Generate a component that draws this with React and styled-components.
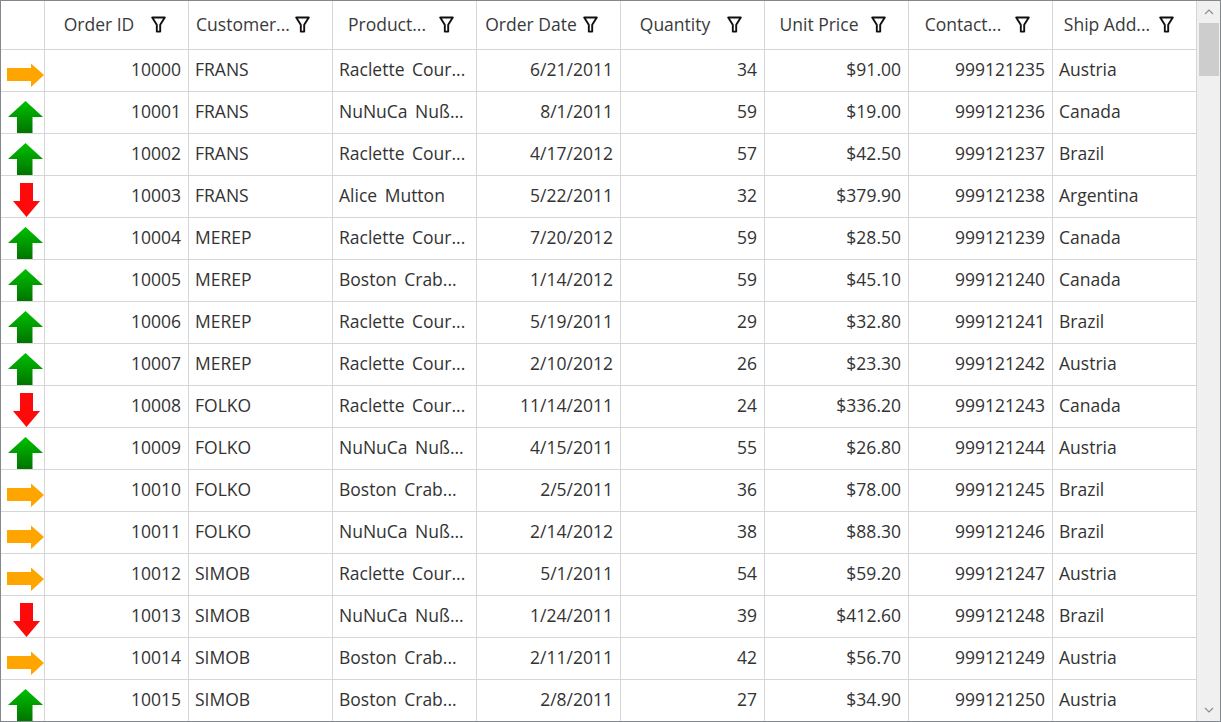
import React from 'react'
import styled, { createGlobalStyle } from 'styled-components'

const GlobalStyle = createGlobalStyle`
  html, body {
    margin: 0;
    padding: 0;
    background: #ffffff;
  }
  * {
    box-sizing: border-box;
  }
`

const Frame = styled.div`
  width: 1221px;
  height: 722px;
  border: 1px solid #828790;
  display: flex;
  overflow: hidden;
  background: #ffffff;
  font-family: "Open Sans", "Noto Sans", sans-serif;
  font-size: 17.5px;
  color: #333333;
`

const Grid = styled.div`
  flex: 1;
  display: grid;
  grid-template-columns: 44px repeat(8, 144px);
  grid-auto-rows: 42px;
  grid-template-rows: 49px;
  align-content: start;
  overflow: hidden;
`

const Corner = styled.div`
  border-right: 1px solid #d6d6d6;
  border-bottom: 1px solid #d6d6d6;
`

const HeaderCell = styled.div`
  display: flex;
  align-items: center;
  padding: 0 22px 2px 6px;
  border-right: 1px solid #d6d6d6;
  border-bottom: 1px solid #d6d6d6;
  color: #3a3a3a;
`

const HeaderLabel = styled.span`
  flex: 1;
  text-align: center;
  white-space: nowrap;
  overflow: hidden;
  padding-right: 4px;
`

const Indicator = styled.div`
  border-right: 1px solid #d6d6d6;
  border-bottom: 1px solid #d6d6d6;
  svg {
    display: block;
  }
`

const Cell = styled.div`
  display: flex;
  align-items: center;
  justify-content: ${p => (p.$right ? 'flex-end' : 'flex-start')};
  padding: 0 7px 3px 6px;
  border-right: 1px solid #d6d6d6;
  border-bottom: 1px solid #d6d6d6;
  white-space: nowrap;
  overflow: hidden;
  word-spacing: ${p => (p.$wide ? '3px' : 'normal')};
`

const ScrollBar = styled.div`
  width: 23px;
  background: #f0f0f0;
  display: flex;
  flex-direction: column;
  align-items: center;
`

const ScrollButton = styled.div`
  height: 22px;
  width: 100%;
  display: flex;
  align-items: center;
  justify-content: center;
`

const Track = styled.div`
  flex: 1;
  width: 100%;
  padding: 0 1px 0 2px;
`

const Thumb = styled.div`
  height: 53px;
  background: #cdcdcd;
`

const FilterIcon = () => (
  <svg width="15" height="17" viewBox="0 0 15 17">
    <path
      d="M1.2 1.5 H13.8 L9.2 8.8 V15.6 H5.8 V8.8 Z"
      fill="none"
      stroke="#111"
      strokeWidth="1.9"
      strokeLinejoin="round"
    />
  </svg>
)

const TrendIcon = ({ trend }) => {
  if (trend === 'up') {
    return (
      <svg width="43" height="41" viewBox="0 0 43 41">
        <defs>
          <linearGradient id="greenUp" x1="0" y1="0" x2="0" y2="1">
            <stop offset="0" stopColor="#00c000" />
            <stop offset="1" stopColor="#007400" />
          </linearGradient>
        </defs>
        <path d="M24.5 9 L42 25 H31.5 V41 H16 V25 H7 Z" fill="url(#greenUp)" />
      </svg>
    )
  }
  if (trend === 'down') {
    return (
      <svg width="43" height="41" viewBox="0 0 43 41">
        <path d="M19 7 H32 V25 H39 L25.5 41 L12 25 H19 Z" fill="#ff0a0a" />
      </svg>
    )
  }
  return (
    <svg width="43" height="41" viewBox="0 0 43 41">
      <path d="M6 18 H30 V13.5 L43 25 L30 37 V31 H6 Z" fill="#ffa500" />
    </svg>
  )
}

const Chevron = ({ up }) => (
  <svg width="10" height="6" viewBox="0 0 10 6">
    <path
      d={up ? 'M1 5 L5 1 L9 5' : 'M1 1 L5 5 L9 1'}
      fill="none"
      stroke="#8a8a8a"
      strokeWidth="1.1"
    />
  </svg>
)

const columns = [
  { label: 'Order ID', key: 'id', right: true },
  { label: 'Customer...', key: 'customer' },
  { label: 'Product...', key: 'product', wide: true },
  { label: 'Order Date', key: 'date', right: true },
  { label: 'Quantity', key: 'qty', right: true },
  { label: 'Unit Price', key: 'price', right: true },
  { label: 'Contact...', key: 'contact', right: true },
  { label: 'Ship Add...', key: 'country' },
]

const RAC = 'Raclette Cour...'
const NUN = 'NuNuCa Nuß...'
const BOS = 'Boston Crab...'

const orders = [
  ['flat', 'FRANS', RAC, '6/21/2011', 34, '$91.00', 'Austria'],
  ['up', 'FRANS', NUN, '8/1/2011', 59, '$19.00', 'Canada'],
  ['up', 'FRANS', RAC, '4/17/2012', 57, '$42.50', 'Brazil'],
  ['down', 'FRANS', 'Alice Mutton', '5/22/2011', 32, '$379.90', 'Argentina'],
  ['up', 'MEREP', RAC, '7/20/2012', 59, '$28.50', 'Canada'],
  ['up', 'MEREP', BOS, '1/14/2012', 59, '$45.10', 'Canada'],
  ['up', 'MEREP', RAC, '5/19/2011', 29, '$32.80', 'Brazil'],
  ['up', 'MEREP', RAC, '2/10/2012', 26, '$23.30', 'Austria'],
  ['down', 'FOLKO', RAC, '11/14/2011', 24, '$336.20', 'Canada'],
  ['up', 'FOLKO', NUN, '4/15/2011', 55, '$26.80', 'Austria'],
  ['flat', 'FOLKO', BOS, '2/5/2011', 36, '$78.00', 'Brazil'],
  ['flat', 'FOLKO', NUN, '2/14/2012', 38, '$88.30', 'Brazil'],
  ['flat', 'SIMOB', RAC, '5/1/2011', 54, '$59.20', 'Austria'],
  ['down', 'SIMOB', NUN, '1/24/2011', 39, '$412.60', 'Brazil'],
  ['flat', 'SIMOB', BOS, '2/11/2011', 42, '$56.70', 'Austria'],
  ['up', 'SIMOB', BOS, '2/8/2011', 27, '$34.90', 'Austria'],
].map((r, i) => ({
  trend: r[0],
  id: 10000 + i,
  customer: r[1],
  product: r[2],
  date: r[3],
  qty: r[4],
  price: r[5],
  contact: 999121235 + i,
  country: r[6],
}))

const App = () => {
  return (
    <>
      <GlobalStyle />
      <Frame>
        <Grid>
          <Corner />
          {columns.map(c => (
            <HeaderCell key={c.key}>
              <HeaderLabel>{c.label}</HeaderLabel>
              <FilterIcon />
            </HeaderCell>
          ))}
          {orders.map(o => (
            <React.Fragment key={o.id}>
              <Indicator>
                <TrendIcon trend={o.trend} />
              </Indicator>
              {columns.map(c => (
                <Cell key={c.key} $right={c.right} $wide={c.wide}>
                  {o[c.key]}
                </Cell>
              ))}
            </React.Fragment>
          ))}
        </Grid>
        <ScrollBar>
          <ScrollButton>
            <Chevron up />
          </ScrollButton>
          <Track>
            <Thumb />
          </Track>
          <ScrollButton>
            <Chevron />
          </ScrollButton>
        </ScrollBar>
      </Frame>
    </>
  )
}

export default App
